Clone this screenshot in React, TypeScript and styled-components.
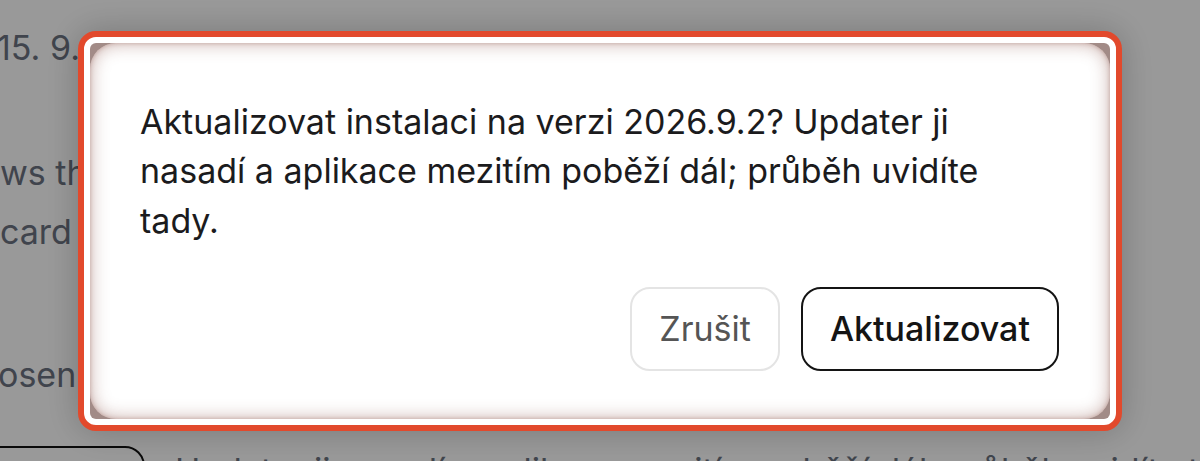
import React from "react";
import styled, { createGlobalStyle } from "styled-components";

const Global = createGlobalStyle`
  html, body {
    margin: 0;
    padding: 0;
    background: #ffffff;
    font-family: Inter, "Noto Sans", "Liberation Sans", sans-serif;
  }
  #root { width: 1200px; height: 461px; overflow: hidden; position: relative; }
`;

const Page = styled.div`
  width: 1200px;
  height: 461px;
  overflow: hidden;
  display: flex;
  flex-direction: column;
  color: #6b7280;
  font-size: 34px;
  line-height: 1;
`;

const BgLine = styled.div<{ $top: number; $indent?: number }>`
  margin-top: ${(p) => p.$top}px;
  margin-left: ${(p) => p.$indent ?? 0}px;
  white-space: nowrap;
`;

const BgRow = styled.div`
  margin-top: 54px;
  display: flex;
  align-items: flex-start;
  gap: 30px;
  margin-left: -20px;
`;

const BgButton = styled.div`
  width: 165px;
  height: 84px;
  border: 2px solid #111;
  border-radius: 20px;
  box-sizing: border-box;
  flex: none;
`;

const BgText = styled.div`
  margin-top: 8px;
  color: #6b7280;
  white-space: nowrap;
`;

const Backdrop = styled.div`
  position: fixed;
  inset: 0;
  background: rgba(0, 0, 0, 0.4);
  display: flex;
  align-items: center;
  justify-content: center;
`;

const Dialog = styled.div`
  width: 1044px;
  box-sizing: border-box;
  border: 6px solid #e2492c;
  border-radius: 18px;
  background: #ffffff;
  padding: 6px;
  box-shadow: 0 0 34px rgba(0, 0, 0, 0.22);
`;

const Frame = styled.div`
  background: #a28b87;
  border-radius: 6px;
`;

const Panel = styled.div`
  background: #ffffff;
  border-radius: 26px;
  padding: 54px 51px 48px 50px;
  box-shadow: inset 0 0 18px rgba(130, 70, 60, 0.45),
    inset 0 0 4px rgba(130, 70, 60, 0.35);
  display: flex;
  flex-direction: column;
`;

const Message = styled.p`
  margin: 0;
  font-size: 34px;
  line-height: 49.5px;
  color: #1b1b1d;
  font-weight: 400;
`;

const Actions = styled.div`
  margin-top: 41.5px;
  display: flex;
  justify-content: flex-end;
  gap: 21px;
`;

const Button = styled.button<{ $primary?: boolean }>`
  height: 84px;
  box-sizing: border-box;
  padding: 0 27px;
  border-radius: 20px;
  background: #ffffff;
  font-family: Inter, "Noto Sans", "Liberation Sans", sans-serif;
  font-size: 34px;
  line-height: 1;
  cursor: pointer;
  border: 2px solid ${(p) => (p.$primary ? "#141414" : "#e4e4e4")};
  color: ${(p) => (p.$primary ? "#141414" : "#555555")};
  font-weight: ${(p) => (p.$primary ? 500 : 400)};
`;

export default function App() {
  return (
    <>
      <Global />
      <Page>
        <BgLine $top={31} $indent={-3}>15. 9. 2026 · 14:32</BgLine>
        <BgLine $top={91}>ws the</BgLine>
        <BgLine $top={25}>card</BgLine>
        <BgLine $top={109} $indent={-2}>osen</BgLine>
        <BgRow>
          <BgButton />
          <BgText>Updater ji nasadí a aplikace mezitím poběží dál; průběh uvidíte tady.</BgText>
        </BgRow>
      </Page>
      <Backdrop>
        <Dialog role="dialog" aria-modal="true">
          <Frame>
            <Panel>
              <Message>
                Aktualizovat instalaci na verzi 2026.9.2? Updater ji nasadí a aplikace mezitím
                poběží dál; průběh uvidíte tady.
              </Message>
              <Actions>
                <Button>Zrušit</Button>
                <Button $primary>Aktualizovat</Button>
              </Actions>
            </Panel>
          </Frame>
        </Dialog>
      </Backdrop>
    </>
  );
}
